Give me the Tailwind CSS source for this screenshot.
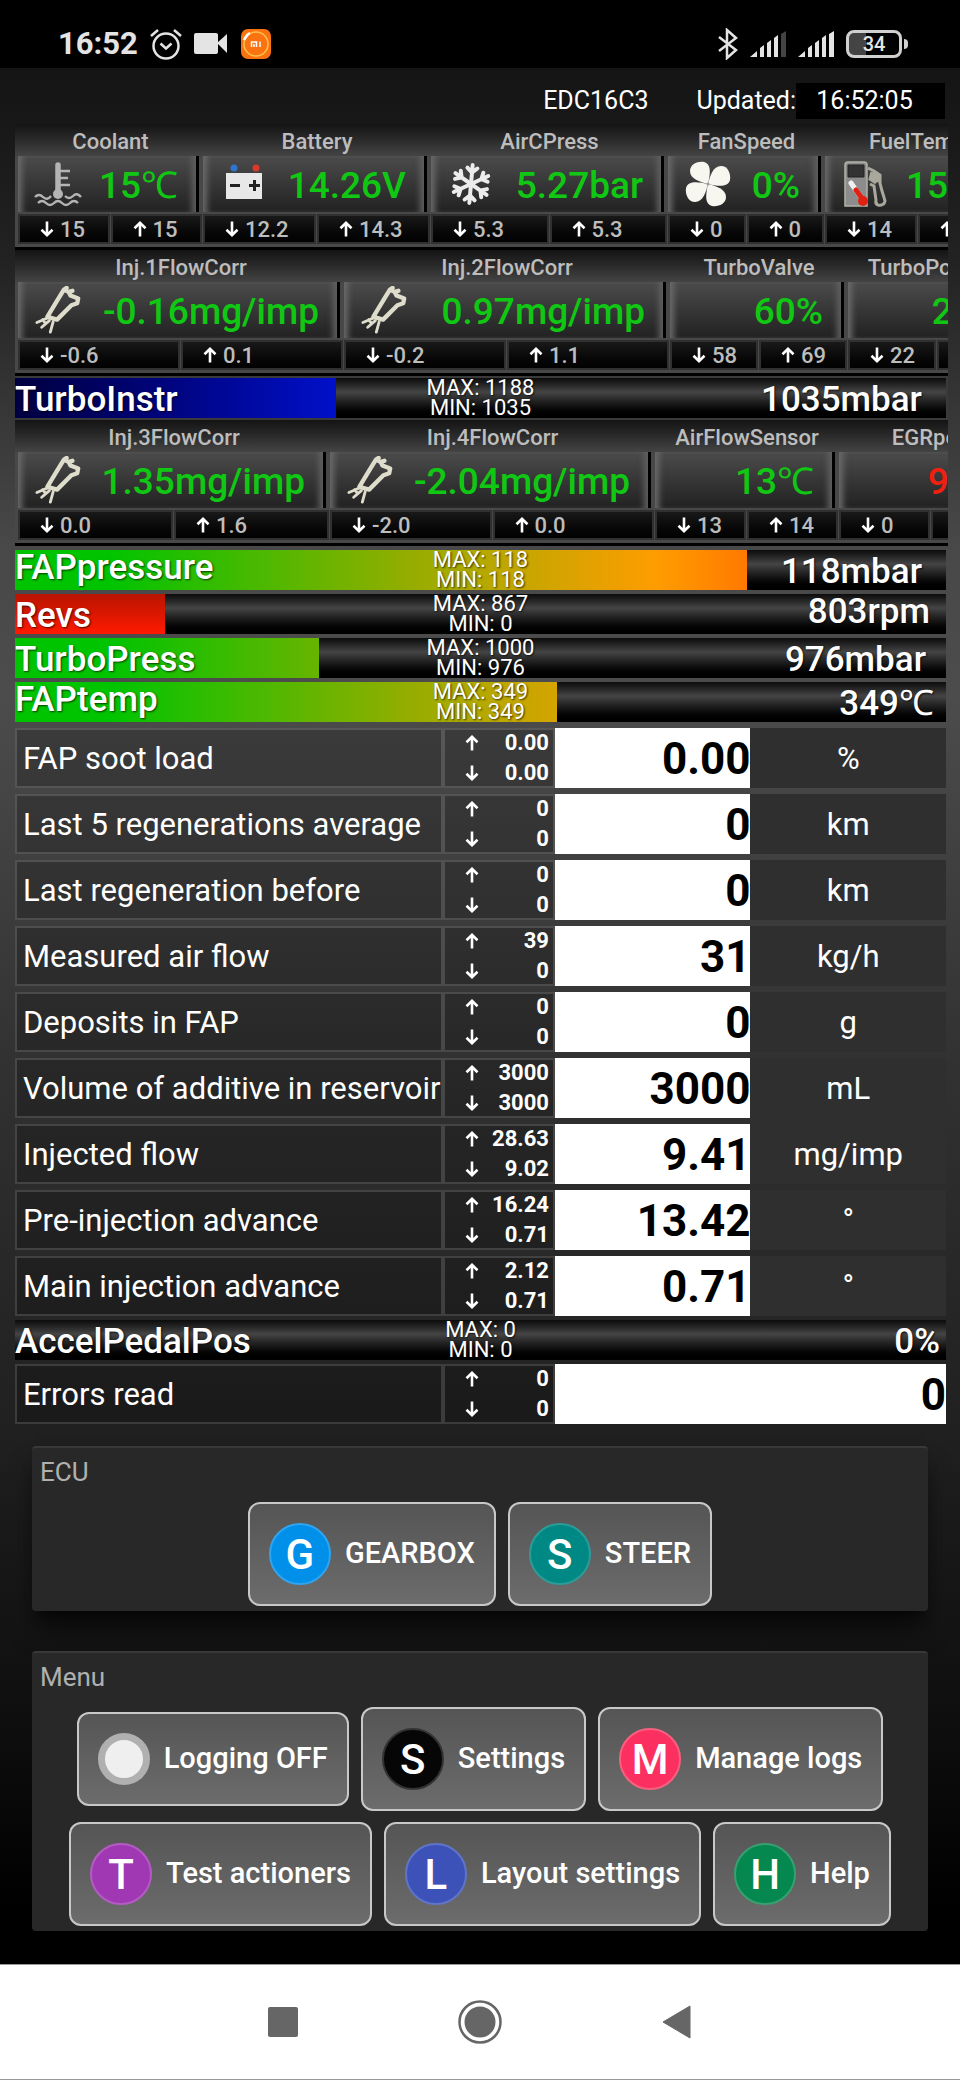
<!DOCTYPE html>
<html lang="en">
<head>
  <title>EDC16C3 live data</title>
  <meta charset="UTF-8" />
  <meta name="viewport" content="width=device-width,initial-scale=1" />
  <script src="https://cdn.jsdelivr.net/npm/@tailwindcss/browser@4"></script>
</head>

<body class="flex min-h-screen flex-col bg-black font-['Roboto',sans-serif] text-white">

  <!-- icon sprite -->
  <svg class="hidden">
    <symbol id="i-up" viewBox="0 0 14 16"><path d="M7 15.500V2M1.500 7.200L7 1.800l5.500 5.400" fill="none" stroke="currentColor" stroke-width="2.600"/></symbol>
    <symbol id="i-down" viewBox="0 0 14 16"><path d="M7 .5V14M1.500 8.800L7 14.200l5.500-5.400" fill="none" stroke="currentColor" stroke-width="2.600"/></symbol>
    <symbol id="i-coolant" viewBox="0 0 48 44">
      <g fill="none" stroke="#b4b4b4" stroke-width="2.400">
        <path d="M24 3v28" stroke-width="5.500" stroke-linecap="round"/>
        <path d="M26 9h10M26 16h8M26 23h10"/>
        <path d="M1 35q4-4 8 0t8-1M31 34q4 4 8 0t8 1M4 41q4-4 8 0t8 0 8 0 8 0 8 0"/>
      </g>
      <circle cx="24" cy="32" r="5" fill="#b4b4b4"/>
    </symbol>
    <symbol id="i-battery" viewBox="0 0 48 44">
      <circle cx="15" cy="6" r="3.500" fill="#2f74d0"/><circle cx="37" cy="6" r="3.500" fill="#d8392c"/>
      <path d="M7 11h36v26H7z" fill="#e8e8e8"/>
      <path d="M11 23.500h10M30 23.500h11M35.500 18v11" stroke="#222" stroke-width="3"/>
    </symbol>
    <symbol id="i-snow" viewBox="0 0 48 44">
      <g transform="rotate(5 24 22)">
        <g id="arm" fill="none" stroke="#ececec" stroke-width="4" stroke-linecap="round"><path d="M24 22V3M19 6l5 4.500L29 6"/></g>
        <use href="#arm" transform="rotate(60 24 22)"/><use href="#arm" transform="rotate(120 24 22)"/><use href="#arm" transform="rotate(180 24 22)"/><use href="#arm" transform="rotate(240 24 22)"/><use href="#arm" transform="rotate(300 24 22)"/>
      </g>
    </symbol>
    <symbol id="i-fan" viewBox="0 0 48 46">
      <path id="blade" d="M24 23C16 21 6 18 6 10 6 3 14 0 20 1c8 2 6 13 4 22z" fill="#f7f7f0"/>
      <use href="#blade" transform="rotate(90 24 23)"/><use href="#blade" transform="rotate(180 24 23)"/><use href="#blade" transform="rotate(270 24 23)"/>
      <circle cx="24" cy="23" r="1.500" fill="#999"/>
    </symbol>
    <symbol id="i-fuel" viewBox="0 0 44 48">
      <path d="M2 46V5q0-3 3-3h16q3 0 3 3v41z" fill="#8c8c8c" stroke="#b4b2a6" stroke-width="1.500"/>
      <path d="M5 5h16v12H5z" fill="#333" stroke="#222"/>
      <path d="M25 8l6 3 6 4v8l2 8q2 6 3 10-1 5-7 4-3-1-2-5l-2-14-4-2M29 12l-2 7 6 4" fill="none" stroke="#aaa89c" stroke-width="3"/>
      <path d="M30 11l6 4v7l-5 1-3-4z" fill="#aaa89c"/>
      <path d="M8 23l9 13" stroke="#f0f0f0" stroke-width="5" stroke-linecap="round"/>
      <path d="M13 30l7 10" stroke="#e02010" stroke-width="5" stroke-linecap="round"/><circle cx="20" cy="41" r="5" fill="#e02010"/>
    </symbol>
    <symbol id="i-injector" viewBox="0 0 48 50">
      <path d="M13 32L25 12l5-8 5 2 2 4 8 3-1 5-6 2L23 35zM30 4l3-2M35 6l4-1" fill="none" stroke="#dedccb" stroke-width="4.500" stroke-linejoin="round" stroke-linecap="round"/>
      <path d="M14 33L2 38M15 36L7 43M19 37l-3 11M8 35l3 4" fill="none" stroke="#dedccb" stroke-width="3" stroke-linecap="round"/>
    </symbol>
  </svg>

  <!-- phone status bar -->
  <div class="flex h-[68px] items-center justify-between bg-black pt-5 pr-13 pl-[58px] text-[#e4e4e4]">
    <div class="flex items-center gap-3">
      <span class="text-[31px] font-bold">16:52</span>
      <svg class="h-8 w-8" viewBox="0 0 32 32" fill="none" stroke="currentColor" stroke-width="2.500"><circle cx="16" cy="18" r="12.500"/><path d="M10.500 15.500L16 20.500l5.500-5"/><path d="M1 8l7-6M31 8l-7-6"/></svg>
      <svg class="h-5.5 w-8.5" viewBox="0 0 34 22" fill="currentColor"><rect width="24" height="21" rx="2"/><path d="M23 10L33 1v19z"/></svg>
      <svg class="h-8 w-8" viewBox="0 0 32 32"><rect x="1" y="1" width="30" height="30" rx="7" fill="#fb7310"/><circle cx="16" cy="16" r="12" fill="none" stroke="#fdc24b" stroke-width="1.500"/><path d="M4 12q2-5 6-7" stroke="#fff" stroke-width="2.500" fill="none"/><path d="M11.500 19v-5h5v5M14 19v-3M20 19v-5.500" stroke="#fff" stroke-width="1.500" fill="none"/></svg>
    </div>
    <div class="flex items-center gap-3">
      <svg class="h-8 w-5" viewBox="0 0 20 32" fill="none" stroke="currentColor" stroke-width="2.500"><path d="M1 9l17 13-9 8V2l9 8L1 23"/></svg>
      <svg class="h-7 w-9" viewBox="0 0 36 28" fill="currentColor"><path d="M0 27l7-6v6zM10 18l4-3v12h-4zM17 13l4-3v17h-4zM24 8l4-3v22h-4z"/><path d="M31 4l5-3v26h-5z" fill="#444"/></svg>
      <svg class="h-7 w-9" viewBox="0 0 36 28" fill="currentColor"><path d="M0 27l7-6v6zM10 18l4-3v12h-4zM17 13l4-3v17h-4zM24 8l4-3v22h-4zM31 4l5-3v26h-5z"/></svg>
      <div class="flex items-center gap-0.5">
        <div class="flex h-7 w-14 items-center justify-center rounded-lg border-3 border-[#d0d0d0] bg-linear-to-r from-[#444] from-34% to-black to-34% text-xl font-medium">34</div>
        <div class="h-2.5 w-1 rounded-r bg-[#d0d0d0]"></div>
      </div>
    </div>
  </div>

  <main class="flex-1 bg-[linear-gradient(#141414,#222_10%,#484848_25%,#4c4c4c_33%,#323232_52%,#202020_72%,#0d0d0d_88%,#000_97%)]">
    <header class="flex h-14 items-center justify-end pt-2.5 pr-[15px] text-[25px]">
      <span class="mr-12">EDC16C3</span>
      <span>Updated:</span>
      <span class="h-9 w-[149px] bg-black pr-3 text-center leading-9">16:52:05</span>
    </header>

    <div id="live" class="pr-3 pl-[15px]"></div>

    <section class="mx-8 mt-4 rounded-sm border-t-2 border-[#383838] bg-[#282828] pb-[5px] shadow-xl shadow-black/60">
      <h2 class="h-[54px] px-2 pt-2 text-[26px] leading-8 text-[#b0b0b0]">ECU</h2>
      <div id="ecu" class="flex items-center justify-center gap-3"></div>
    </section>

    <section class="mx-8 mt-10 rounded-sm border-t-2 border-[#383838] bg-[#282828] pb-[5px]">
      <h2 class="h-[54px] px-2 pt-2 text-[26px] leading-8 text-[#b0b0b0]">Menu</h2>
      <div id="menu" class="flex flex-wrap items-center justify-center gap-x-3 gap-y-[11px]"></div>
    </section>
  </main>

  <!-- system navigation -->
  <nav class="flex h-[116px] items-center justify-center gap-40 border-y border-[#999] bg-white text-[#666]">
    <button aria-label="Recent apps"><svg class="h-[30px] w-[30px]" viewBox="0 0 30 30" fill="currentColor"><rect width="30" height="30" rx="2"/></svg></button>
    <button aria-label="Home"><svg class="h-11 w-11" viewBox="0 0 44 44" fill="currentColor"><circle cx="22" cy="22" r="20.500" fill="none" stroke="currentColor" stroke-width="2.500"/><circle cx="22" cy="22" r="15.500"/></svg></button>
    <button aria-label="Back"><svg class="h-[34px] w-[30px]" viewBox="0 0 30 34" fill="currentColor"><path d="M1 17L28 1v32z" stroke="currentColor" stroke-linejoin="round"/></svg></button>
  </nav>

  <script>
    const icon = (name, cls) => `<svg class="${cls}"><use href="#i-${name}"/></svg>`;

    // name, icon, value, min, max, cell width
    const strips = {
      temps: [
        ['Coolant', 'coolant', '15℃', '15', '15', 185],
        ['Battery', 'battery', '14.26V', '12.2', '14.3', 228],
        ['AirCPress', 'snow', '5.27bar', '5.3', '5.3', 237],
        ['FanSpeed', 'fan', '0%', '0', '0', 157],
        ['FuelTemp', 'fuel', '15℃', '14', '15', 185],
      ],
      injA: [
        ['Inj.1FlowCorr', 'injector', '-0.16mg/imp', '-0.6', '0.1', 326],
        ['Inj.2FlowCorr', 'injector', '0.97mg/imp', '-0.2', '1.1', 326],
        ['TurboValve', '', '60%', '58', '69', 178],
        ['TurboPosition', '', '22%', '22', '69', 178],
      ],
      injB: [
        ['Inj.3FlowCorr', 'injector', '1.35mg/imp', '0.0', '1.6', 312],
        ['Inj.4FlowCorr', 'injector', '-2.04mg/imp', '-2.0', '0.0', 325],
        ['AirFlowSensor', '', '13℃', '13', '14', 184],
        ['EGRpos', '', '90%', '0', '90', 183, 'text-[#f02010]'],
      ],
    };

    const minMax = (dir, value) => `
      <div class="flex flex-1 items-center gap-1.5 bg-linear-to-b from-[#191919] to-[#020202] pl-5 text-[22px] font-medium text-[#bdbdbd] outline-2 outline-[#303030]">
        ${icon(dir, 'h-4.5 w-3.5 text-white')}${value}
      </div>`;

    const cell = ([name, ico, value, min, max, width, color]) => `
      <div class="shrink-0" style="width:${width}px">
        <h3 class="h-8 text-center text-[22px] leading-9 font-medium text-[#bdbdbd]">${name}</h3>
        <div class="mr-1 flex h-14 items-center border-r-3 border-black bg-linear-to-b from-[#4c4c4c] to-[#222] pr-[18px] pl-4 shadow-[inset_8px_0_6px_-4px_#6a6a6a,inset_-8px_0_6px_-4px_#606060]">
          ${ico ? icon(ico, 'h-12 w-12') : ''}
          <span class="ml-auto pt-1 text-[37px] font-medium ${color || 'text-[#10c814]'}">${value}</span>
        </div>
        <div class="mt-1 flex h-[26px] gap-[5px] pr-[3px] pl-0.5">${minMax('down', min)}${minMax('up', max)}</div>
      </div>`;

    const strip = (cells) => `
      <section class="flex h-[126px] overflow-hidden border-b-3 border-black bg-linear-to-b from-[#141414] to-[#484848] to-28% pl-[3px]">${cells.map(cell).join('')}</section>`;

    // text with descenders sits at the top of its bar, the rest at the bottom
    const seat = (text) => /[gpqy]/.test(text) ? 'self-start' : 'self-end';

    const fills = {
      blue: 'bg-linear-to-r from-[#000040] to-[#0010c8] to-34%',
      red: 'bg-linear-to-b from-[#b81400] to-[#ff1a00]',
      heat: 'bg-[linear-gradient(90deg,#00c400_10%,#9cac00_44%,#d4a400_58%,#ff9c00_69%,#ff7800_79%)]',
    };

    const bar = (name, fill, pct, max, min, value, pad) => `
      <div class="relative h-10 ${fills[fill]}">
        <div class="absolute inset-y-0 right-0 bg-linear-to-b from-[#0c0c0c] via-[#454545] via-35% to-black" style="left:${pct}%"></div>
        <div class="relative grid h-10 grid-cols-3 leading-9 text-shadow-[1px_1px_2px_rgb(0_0_0/0.7)]">
          <span class="text-[35px] font-medium ${seat(name)}">${name}</span>
          <span class="text-center text-[22px] leading-5">MAX: ${max}<br>MIN: ${min}</span>
          <span class="text-right text-[35px] font-medium ${pad} ${seat(value)}">${value}</span>
        </div>
      </div>`;

    // name, max, min, value, unit
    const readings = [
      ['FAP soot load', '0.00', '0.00', '0.00', '%'],
      ['Last 5 regenerations average', '0', '0', '0', 'km'],
      ['Last regeneration before', '0', '0', '0', 'km'],
      ['Measured air flow', '39', '0', '31', 'kg/h'],
      ['Deposits in FAP', '0', '0', '0', 'g'],
      ['Volume of additive in reservoir', '3000', '3000', '3000', 'mL'],
      ['Injected flow', '28.63', '9.02', '9.41', 'mg/imp'],
      ['Pre-injection advance', '16.24', '0.71', '13.42', '°'],
      ['Main injection advance', '2.12', '0.71', '0.71', '°'],
    ];

    const limit = (dir, value) => `
      <div class="flex h-[30px] items-center justify-between">${icon(dir, 'h-4 w-3.5')}${value}</div>`;

    const row = ([name, max, min, value, unit]) => `
      <tr class="h-[60px]">
        <th scope="row" class="overflow-hidden bg-black/20 py-0 pt-0.5 pl-2 text-left text-[31px] leading-10 font-normal whitespace-nowrap inset-ring-2 inset-ring-white/15">${name}</th>
        <td class="bg-black/20 p-0 pr-1.5 pl-[22px] text-[22px] leading-7 font-bold inset-ring-2 inset-ring-white/15">${limit('up', max)}${limit('down', min)}</td>
        <td class="bg-white p-0 pt-0.5 text-right text-[44px] leading-10 font-bold text-black" ${unit ? '' : 'colspan="2"'}>${value}</td>
        ${unit ? `<td class="bg-[#2f2f2f] p-0 pt-0.5 text-center text-[31px] leading-10">${unit}</td>` : ''}
      </tr>`;

    const table = (rows) => `
      <table class="w-full table-fixed border-separate border-spacing-x-0 border-spacing-y-1.5">
        <colgroup><col class="w-[46%]"><col class="w-[12%]"><col class="w-[21%]"><col class="w-[21%]"></colgroup>
        ${rows.map(row).join('')}
      </table>`;

    document.getElementById('live').innerHTML = `
      ${strip(strips.temps)}
      ${strip(strips.injA)}
      <div class="bg-[#3a3a3a] py-0.5 pr-0.5">${bar('TurboInstr', 'blue', 34.5, 1188, 1035, '1035mbar', 'pr-6')}</div>
      ${strip(strips.injB)}
      <div class="flex flex-col gap-1 pt-1 pr-0.5">
        ${bar('FAPpressure', 'heat', 78.6, 118, 118, '118mbar', 'pr-6')}
        ${bar('Revs', 'red', 16.1, 867, 0, '803rpm', 'pr-4')}
        ${bar('TurboPress', 'heat', 32.6, 1000, 976, '976mbar', 'pr-5')}
        ${bar('FAPtemp', 'heat', 58.2, 349, 349, '349℃', 'pr-3')}
      </div>
      <div class="pr-0.5">
        ${table(readings)}
        <div class="-my-0.5">${bar('AccelPedalPos', 'heat', 0, 0, 0, '0%', 'pr-1.5')}</div>
        ${table([['Errors read', '0', '0', '0', '']])}
      </div>`;

    // label, letter, badge colours
    const button = ([label, letter, badge]) => `
      <button class="flex items-center gap-3.5 rounded-xl border-2 border-[#c8c8c8] bg-linear-to-b from-[#555] to-[#6c6c6c] p-[19px] text-[29px] font-medium">
        <span class="flex items-center justify-center rounded-full border-2 text-[42px] ${badge}">${letter}</span>${label}
      </button>`;

    document.getElementById('ecu').innerHTML = [
      ['GEARBOX', 'G', 'size-[62px] border-[#30a4ee] bg-[#0090ea]'],
      ['STEER', 'S', 'size-[62px] border-[#2c9c98] bg-[#008984]'],
    ].map(button).join('');

    document.getElementById('menu').innerHTML = [
      ['Logging OFF', '', 'size-[52px] border-7 border-[#b0b0b0] bg-[#efefef]'],
      ['Settings', 'S', 'size-[62px] border-[#333] bg-[#060606]'],
      ['Manage logs', 'M', 'size-[62px] border-[#f86080] bg-[#fb3060]'],
      ['Test actioners', 'T', 'size-[62px] border-[#b45cc4] bg-[#a038b4]'],
      ['Layout settings', 'L', 'size-[62px] border-[#6074c8] bg-[#3d52b8]'],
      ['Help', 'H', 'size-[62px] border-[#38a070] bg-[#048850]'],
    ].map(button).join('');
  </script>
</body>
</html>
